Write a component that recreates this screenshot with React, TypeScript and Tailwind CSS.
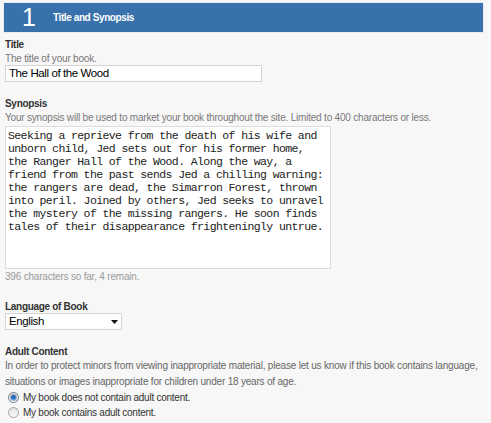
import { useState } from "react";

const synopsis = [
  "Seeking a reprieve from the death of his wife and",
  "unborn child, Jed sets out for his former home,",
  "the Ranger Hall of the Wood. Along the way, a",
  "friend from the past sends Jed a chilling warning:",
  "the rangers are dead, the Simarron Forest, thrown",
  "into peril. Joined by others, Jed seeks to unravel",
  "the mystery of the missing rangers. He soon finds",
  "tales of their disappearance frighteningly untrue.",
];

function Radio({ checked, label, onClick }: { checked: boolean; label: string; onClick: () => void }) {
  return (
    <label className="flex h-[15px] cursor-pointer items-center gap-[4px] pl-[3px]" onClick={onClick}>
      <span
        className={
          "flex h-[11px] w-[11px] items-center justify-center rounded-full border bg-gradient-to-b from-[#e2e2e2] to-[#fbfbfb] " +
          (checked ? "border-[#6a7b8d]" : "border-[#a3a3a3]")
        }
      >
        {checked && (
          <span className="h-[5px] w-[5px] rounded-full bg-gradient-to-b from-[#1c4f9c] to-[#3b8be0] ring-1 ring-[#2a4a78]/40" />
        )}
      </span>
      <span className="text-[10px] leading-[15px] tracking-[-0.25px] text-[#333]">{label}</span>
    </label>
  );
}

export default function App() {
  const [adult, setAdult] = useState(false);

  return (
    <div className="min-h-screen bg-[#f7f7f7] pt-[2px] font-['Liberation_Sans',Arial,sans-serif]">
      {/* section header */}
      <div className="ml-[3px] w-[481px] border border-[#e6ecf3]">
        <div className="flex h-[29px] items-center bg-[#3871ab] text-white">
          <span className="ml-[18px] w-[31px] text-[25px] leading-none">1</span>
          <span className="text-[10px] font-bold tracking-[-0.4px]">Title and Synopsis</span>
        </div>
      </div>

      <div className="pl-[5px] pr-[2px]">
        {/* title */}
        <div className="mt-[5px] text-[10px] font-bold leading-[14px] tracking-[-0.3px] text-[#333]">Title</div>
        <div className="text-[10px] leading-[13px] tracking-[-0.2px] text-[#777]">The title of your book.</div>
        <div className="flex h-[17px] w-[257px] items-center border border-[#d4d4d4] bg-white pl-[3px] text-[11.5px] tracking-[-0.4px] text-black">
          The Hall of the Wood
        </div>

        {/* synopsis */}
        <div className="mt-[15px] text-[10px] font-bold leading-[14px] tracking-[-0.3px] text-[#333]">Synopsis</div>
        <div className="text-[10px] leading-[14px] tracking-[-0.2px] text-[#777]">
          Your synopsis will be used to market your book throughout the site. Limited to 400 characters or less.
        </div>
        <div className="mt-[1px] h-[143px] w-[326px] border border-[#dcdcdc] bg-white pl-[2px] pt-[2px] font-['Liberation_Mono','Courier_New',monospace] text-[11.5px] leading-[13px] tracking-[-0.6px] text-[#222]">
          {synopsis.map((line, i) => (
            <div key={i} className="whitespace-pre">
              {line}
            </div>
          ))}
        </div>
        <div className="mt-[1px] text-[10px] leading-[14px] tracking-[-0.2px] text-[#9a9a9a]">396 characters so far, 4 remain.</div>

        {/* language */}
        <div className="mt-[16px] text-[10px] font-bold leading-[13px] tracking-[-0.3px] text-[#333]">Language of Book</div>
        <div className="flex h-[17px] w-[117px] items-center justify-between border border-[#d4d4d4] bg-white pl-[3px] pr-[3px] text-[11.5px] tracking-[-0.4px] text-black">
          <span>English</span>
          <svg width="7" height="4" viewBox="0 0 7 4">
            <path d="M0 0h7L3.5 4z" fill="#111" />
          </svg>
        </div>

        {/* adult content */}
        <div className="mt-[15px] text-[10px] font-bold leading-[13px] tracking-[-0.3px] text-[#333]">Adult Content</div>
        <p className="text-[10px] leading-[16px] tracking-[-0.2px] text-[#666]">
          In order to protect minors from viewing inappropriate material, please let us know if this book contains language,
          situations or images inappropriate for children under 18 years of age.
        </p>
        <Radio checked={!adult} label="My book does not contain adult content." onClick={() => setAdult(false)} />
        <Radio checked={adult} label="My book contains adult content." onClick={() => setAdult(true)} />
      </div>
    </div>
  );
}
